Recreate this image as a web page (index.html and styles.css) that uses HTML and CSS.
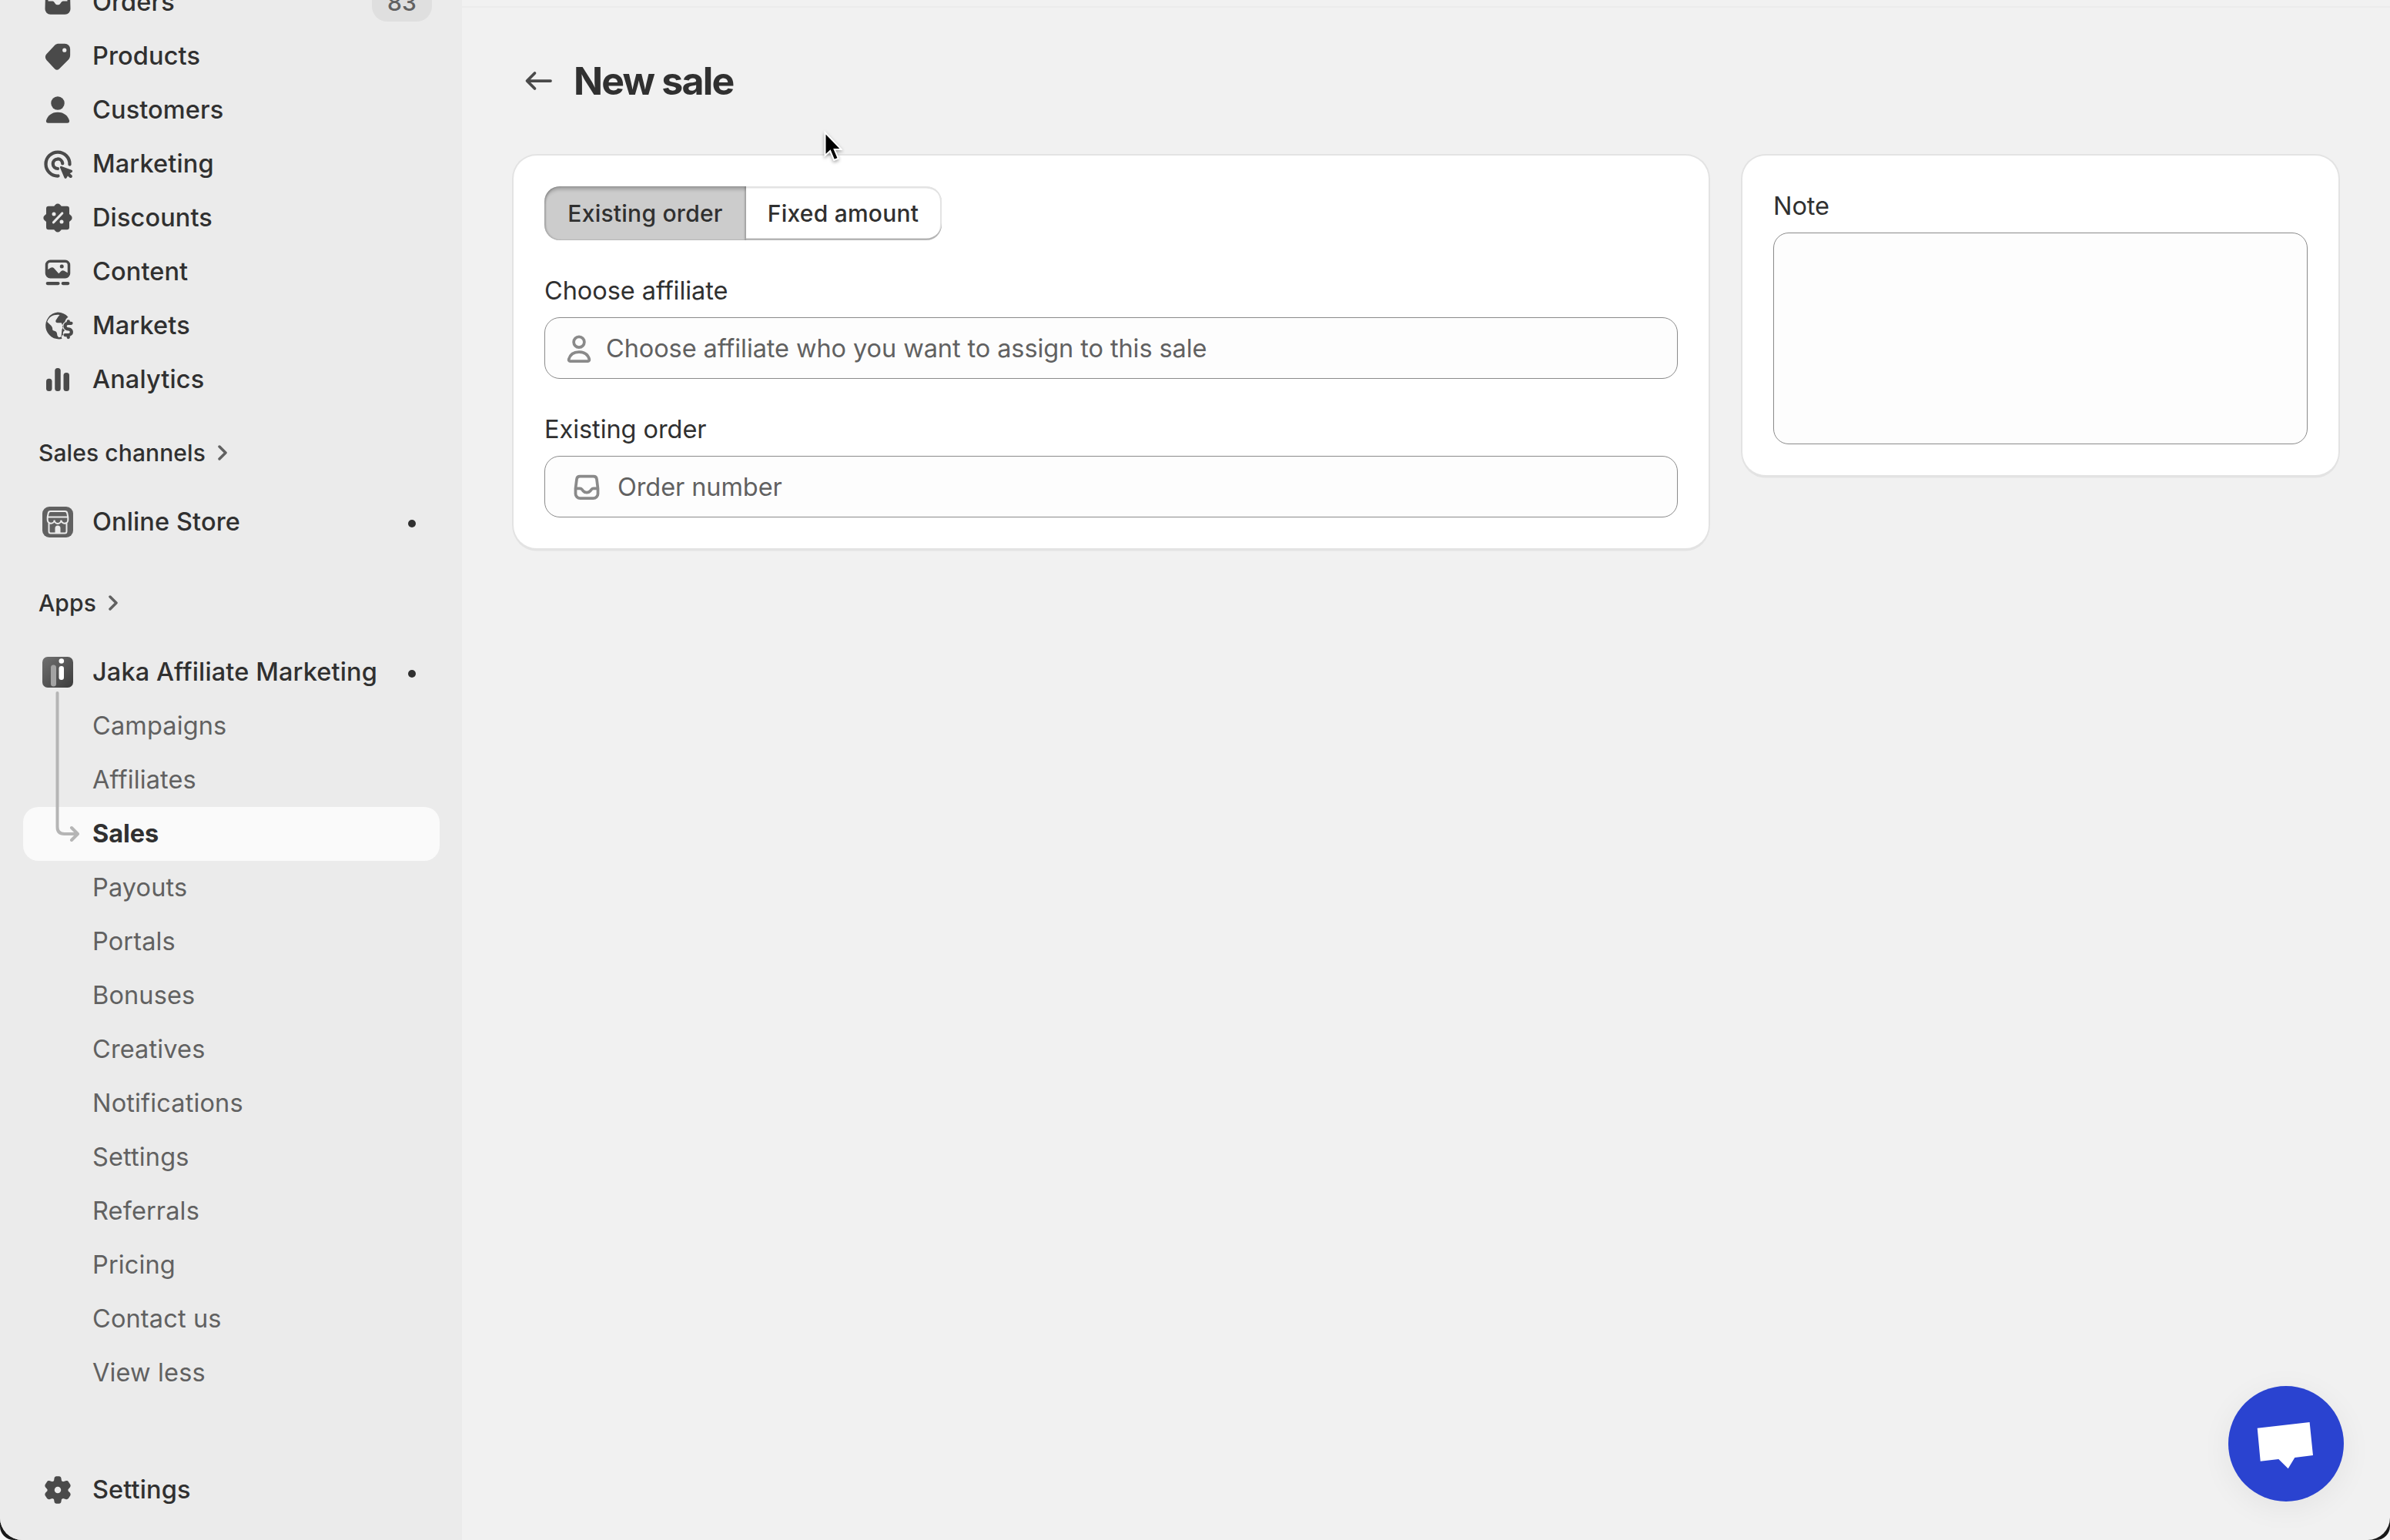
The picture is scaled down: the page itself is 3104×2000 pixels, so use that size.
FILE: index.html
```html
<!DOCTYPE html>
<html lang="en">
<head>
    <meta charset="utf-8">
    <title>New sale</title>
    <link rel="stylesheet" href="styles.css">
</head>
<body>
    <div class="frame">
    <div class="window">
        <nav class="sidebar">
            <ul class="nav-list">
                <li class="nav-item">
                    <svg class="icon" viewBox="0 0 20 20"><path fill-rule="evenodd" d="M6 3.5h8a2.4 2.4 0 0 1 2.4 2L16.6 13.5a2.8 2.8 0 0 1-2.8 2.8h-7.6a2.8 2.8 0 0 1-2.8-2.8l.2-8a2.4 2.4 0 0 1 2.4-2zM5 9.4h2c.5 0 .9.2 1.2.6l.5.7c.6.8 2 .8 2.6 0l.5-.7c.3-.4.7-.6 1.2-.6h2v-3a1.3 1.3 0 0 0-1.3-1.3h-7.4a1.3 1.3 0 0 0-1.3 1.3z"/></svg>
                    <span>Orders</span>
                    <span class="count">83</span>
                </li>
                <li class="nav-item">
                    <svg class="icon" viewBox="0 0 20 20"><path fill-rule="evenodd" d="M10.6 3.5h3.1a2.75 2.75 0 0 1 2.75 2.75v3.1c0 .9-.3 1.7-.9 2.4l-4.7 4.7a1.8 1.8 0 0 1-2.5 0l-4.2-4.5a2.3 2.3 0 0 1 0-3.1l4.3-4.6c.6-.5 1.3-.75 2.15-.75zM13.5 7.9a1.05 1.05 0 1 0 0-2.1 1.05 1.05 0 0 0 0 2.1z"/></svg>
                    <span>Products</span>
                </li>
                <li class="nav-item">
                    <svg class="icon" viewBox="0 0 20 20"><circle cx="10" cy="6.4" r="3.5"/><path d="M10 11.1c-3.3 0-5.4 2-6 4.3-.2.8.3 1.3 1 1.3h10c.7 0 1.2-.5 1-1.3-.6-2.3-2.7-4.3-6-4.3z"/></svg>
                    <span>Customers</span>
                </li>
                <li class="nav-item">
                    <svg class="icon" viewBox="0 0 20 20"><g class="line"><path d="M16.2 10.2a6.2 6.2 0 1 0-6 6"/><path d="M12.5 9.7a2.5 2.5 0 1 0-2.5 2.7"/></g><path d="M11.2 11.9c-.1-.5.3-.9.8-.7l5.2 1.9c.6.2.6 1 .1 1.2l-1 .6 1 .9c.4.4.3.9 0 1.2s-.8.3-1.2 0l-.9-.8-.6 1c-.3.5-1 .5-1.2-.1z"/></svg>
                    <span>Marketing</span>
                </li>
                <li class="nav-item">
                    <svg class="icon" viewBox="0 0 20 20"><path d="M8.800 3.1a1.6 1.6 0 0 1 2.4 0l.7.8h2.9a1.2 1.2 0 0 1 1.2 1.2v2.9l.9.8a1.6 1.6 0 0 1 0 2.4l-.9.8v2.9a1.2 1.2 0 0 1-1.2 1.2h-2.9l-.7.8a1.6 1.6 0 0 1-2.4 0l-.7-.8h-2.9a1.2 1.2 0 0 1-1.2-1.2v-2.9l-.9-.8a1.6 1.6 0 0 1 0-2.4l.9-.8v-2.9a1.2 1.2 0 0 1 1.2-1.2h2.9z"/><path class="cut" d="M7.8 12.3l4.5-4.7"/><circle class="hole" cx="8" cy="8" r="1"/><circle class="hole" cx="12" cy="12" r="1"/></svg>
                    <span>Discounts</span>
                </li>
                <li class="nav-item">
                    <svg class="icon" viewBox="0 0 20 20"><path fill-rule="evenodd" d="M6.1 3.8h7.8a2.6 2.6 0 0 1 2.6 2.6v4.4a2.6 2.6 0 0 1-2.6 2.6h-7.8a2.6 2.6 0 0 1-2.6-2.6v-4.4a2.6 2.6 0 0 1 2.6-2.6zM4.9 8.8l1.4-.9c.6-.4 1.3-.3 1.7.2l2.5 2.8 1.2-1.2c.5-.5 1.2-.6 1.7-.2l1.7 1v-4.1a1.2 1.2 0 0 0-1.2-1.2h-7.8a1.2 1.2 0 0 0-1.2 1.2z"/><circle cx="12.1" cy="7.2" r="1"/><path class="line" d="M4.7 16h5.5M12.7 16h2.6"/></svg>
                    <span>Content</span>
                </li>
                <li class="nav-item">
                    <svg class="icon" viewBox="0 0 20 20"><path fill-rule="evenodd" d="M10 3c2.2 0 4 .9 5.4 2.5-.9.7-1.5 1.5-1.7 2.5-.8.5-1.3 1.2-1.3 2.2 0 1 .5 1.7 1.3 2.2-.9.5-1.2 1.4-.9 2.2-.9.6-1 1.5-.6 2.200a7 7 0 1 1-2.200-13.800zM4.500 8l2.100 2c.5.6.7 1.2.7 2 0 .7 1.2.6 1.8 1.1.6.5.5 1.2.7 2.1l.7.9 1.3-.3.4-3.9.6-1.300-.9-2.100h-2c-.8 0-1.200-.6-.9-1.300l1.300-2 .7-.8c-3-.4-5.500.8-6.500 3.600z"/><path class="line" d="M17 8.7h-1.7a1.5 1.5 0 0 0 0 3h.3a1.5 1.5 0 0 1 0 3.1h-1.8M15.5 7.7v.8M15.5 15v1"/></svg>
                    <span>Markets</span>
                </li>
                <li class="nav-item">
                    <svg class="icon" viewBox="0 0 20 20"><rect x="4" y="9.5" width="3" height="6.5" rx="1.4"/><rect x="8.5" y="4" width="3" height="12" rx="1.4"/><rect x="13" y="6.4" width="3" height="9.6" rx="1.4"/></svg>
                    <span>Analytics</span>
                </li>
            </ul>

            <div class="nav-heading">
                <span>Sales channels</span>
                <svg class="chevron" viewBox="0 0 14 20"><path d="M2 2l8 8-8 8"/></svg>
            </div>
            <ul class="nav-list">
                <li class="nav-item">
                    <svg class="app-icon" viewBox="0 0 40 40"><rect class="store-bg" width="40" height="40" rx="9"/><path class="store-door" d="M16.5 34.5v-6.500a3.5 3.5 0 0 1 7 0v6.500z"/><g class="store-line"><path d="M10.5 6h19c1.5 0 2.5 1 2.8 2.5l1 5v3.5a4.4 4.4 0 0 1-8.9.5 4.4 4.4 0 0 1-8.8 0 4.4 4.4 0 0 1-8.9-.5v-3.5l1-5c.3-1.5 1.3-2.5 2.8-2.5zM7 13.5h26M8.5 21v11c0 1.5.8 2.5 2.3 2.5h18.4c1.5 0 2.3-1 2.3-2.5v-11"/></g></svg>
                    <span>Online Store</span>
                    <span class="dot"></span>
                </li>
            </ul>

            <div class="nav-heading apps">
                <span>Apps</span>
                <svg class="chevron" viewBox="0 0 14 20"><path d="M2 2l8 8-8 8"/></svg>
            </div>
            <ul class="nav-list sub-list">
                <li class="nav-item">
                    <svg class="app-icon" viewBox="0 0 40 40">
                        <defs><linearGradient id="jaka" x1="0" y1="0" x2="1" y2="1"><stop offset="0" stop-color="#707070"/><stop offset="1" stop-color="#3c3c3c"/></linearGradient></defs>
                        <rect width="40" height="40" rx="7" fill="url(#jaka)"/><rect x="11" y="10.5" width="7" height="28" rx="3.5" fill="#a3a3a3"/><rect x="21.5" y="12" width="6.5" height="18" rx="3.2" fill="#fff"/><circle cx="24.8" cy="5.5" r="3.3" fill="#fff"/>
                    </svg>
                    <span>Jaka Affiliate Marketing</span>
                    <span class="dot"></span>
                </li>
                <li class="nav-item sub">Campaigns</li>
                <li class="nav-item sub">Affiliates</li>
                <li class="nav-item sub active">Sales</li>
                <li class="nav-item sub">Payouts</li>
                <li class="nav-item sub">Portals</li>
                <li class="nav-item sub">Bonuses</li>
                <li class="nav-item sub">Creatives</li>
                <li class="nav-item sub">Notifications</li>
                <li class="nav-item sub">Settings</li>
                <li class="nav-item sub">Referrals</li>
                <li class="nav-item sub">Pricing</li>
                <li class="nav-item sub">Contact us</li>
                <li class="nav-item sub">View less</li>
                <svg class="branch" viewBox="0 0 32 198"><path d="M2.5 2v174q0 9 9 9h16M21 177l8 8-8 8"/></svg>
            </ul>

            <div class="nav-item settings">
                <svg class="icon" viewBox="0 0 20 20"><path fill-rule="evenodd" d="M8.2 4c.1-.7.5-1.1 1.1-1.1h1.4c.6 0 1 .4 1.1 1.1l.2 1.3.8.4 1.3-.4c.6-.2 1.2 0 1.5.5l.8 1.2c.4.6.3 1.2-.1 1.7l-.9 1v.8l.9.9c.4.5.5 1.1.1 1.7l-.8 1.2c-.3.5-.9.7-1.5.5l-1.3-.4-.8.4-.2 1.2c-.1.7-.5 1.1-1.1 1.1h-1.4c-.6 0-1-.4-1.1-1.1l-.2-1.2-.8-.4-1.3.4c-.6.2-1.2 0-1.5-.5l-.8-1.2c-.4-.6-.3-1.2.1-1.7l.9-.9v-.8l-.9-1c-.4-.5-.5-1.1-.1-1.7l.8-1.2c.3-.5.9-.7 1.5-.5l1.3.4.8-.4zM10 11.7a1.7 1.7 0 1 0 0-3.4 1.7 1.7 0 0 0 0 3.4z"/></svg>
                <span>Settings</span>
            </div>
        </nav>

        <main class="main">
            <header class="page-header">
                <svg class="back" viewBox="0 0 50 50"><path d="M40 25h-29M19.5 15l-10 10 10 10"/></svg>
                <h1>New sale</h1>
            </header>

            <div class="layout">
                <section class="card">
                    <div class="segmented">
                        <button class="segment pressed">Existing order</button>
                        <button class="segment">Fixed amount</button>
                    </div>
                    <div class="field">
                        <label>Choose affiliate</label>
                        <div class="input">
                            <svg class="field-icon" viewBox="0 0 20 20"><circle cx="10" cy="6.5" r="2.75"/><path d="M10 11.6c-2.8 0-4.7 1.5-5.3 3.8-.1.6.1 1 .7 1h9.2c.6 0 .8-.4.7-1-.6-2.3-2.5-3.8-5.3-3.8z"/></svg>
                            <span>Choose affiliate who you want to assign to this sale</span>
                        </div>
                    </div>
                    <div class="field">
                        <label>Existing order</label>
                        <div class="input order">
                            <svg class="field-icon" viewBox="0 0 20 20"><path d="M6.5 4.25h7c.9 0 1.6.6 1.7 1.5l.6 4.8v2.7a2.4 2.4 0 0 1-2.4 2.4h-6.8a2.4 2.4 0 0 1-2.4-2.4v-2.7l.6-4.8c.1-.9.8-1.5 1.7-1.5zM4.3 10.5h2.2c.5 0 .8.2 1.1.6l.5.7c.9 1.1 2.900 1.1 3.8 0l.5-.7c.3-.4.6-.6 1.1-.6h2.2"/></svg>
                            <span>Order number</span>
                        </div>
                    </div>
                </section>

                <aside class="card">
                    <div class="field">
                        <label>Note</label>
                        <div class="input note"></div>
                    </div>
                </aside>
            </div>
        </main>
    </div>
    </div>

    <div class="chat">
        <svg viewBox="0 0 150 150"><path d="M37.7 54.7L105.6 47l4.4 43-23.7 3-8.6 14.3-12.4-12.3-23.6 2.7z"/></svg>
    </div>
    <svg class="cursor" viewBox="0 0 24 42"><path d="M1.5 2v30l6.7-6 5 12 5.5-2.3-5-11.7h9z"/></svg>
</body>
</html>
```
FILE: styles.css
```css
* {
    box-sizing: border-box;
}
body {
    margin: 0;
    height: 2000px;
    overflow: hidden;
    background: #f7f7f7;
    font-family: Inter, sans-serif;
    font-size: 32.5px;
    line-height: 50px;
    color: #303030;
}
.frame {
    background: #1a1a1a;
    border-radius: 0 0 18px 18px;
}
.window {
    display: flex;
    height: 2000px;
    overflow: hidden;
    background: #f1f1f1;
    border-radius: 0 0 29px 29px;
}
/* Sidebar */
.sidebar {
    display: flex;
    flex-direction: column;
    width: 600px;
    height: 2032px;
    margin-top: -32px;
    padding: 0 29px 30px 30px;
    background: #ebebeb;
}
.nav-list {
    list-style: none;
    margin: 0;
    padding: 0;
}
.nav-item {
    display: flex;
    align-items: center;
    height: 70px;
    padding: 0 10px 0 20px;
    border-radius: 20px;
    font-weight: 550;
    letter-spacing: 0.12px;
}
.icon {
    width: 50px;
    height: 50px;
    margin-right: 20px;
    fill: #4a4a4a;
}
.icon .line {
    fill: none;
    stroke: #4a4a4a;
    stroke-width: 1.7;
    stroke-linecap: round;
}
.icon .cut {
    stroke: #ebebeb;
    stroke-width: 1.3;
    stroke-linecap: round;
}
.icon .hole {
    fill: #ebebeb;
}
.app-icon {
    width: 40px;
    height: 40px;
    margin: 0 25px 0 5px;
}
.store-bg {
    fill: #616161;
}
.store-door {
    fill: #ebebeb;
}
.store-line {
    fill: none;
    stroke: #ebebeb;
    stroke-width: 2;
}
.count {
    height: 50px;
    margin-left: auto;
    padding: 0 20px;
    border-radius: 20px;
    background: #dfdfdf;
    color: #616161;
    font-size: 30px;
}
.dot {
    width: 10px;
    height: 10px;
    margin: 4px 21px 0 auto;
    border-radius: 50%;
    background: #303030;
}
.nav-heading {
    display: flex;
    align-items: center;
    height: 70px;
    margin: 25px 0 20px;
    padding-left: 20px;
    font-size: 30px;
    font-weight: 550;
    letter-spacing: 0.1px;
}
.nav-heading.apps {
    margin-top: 35px;
}
.chevron {
    width: 14px;
    height: 20px;
    margin-left: 16px;
    fill: none;
    stroke: #616161;
    stroke-width: 3.5;
    stroke-linecap: round;
    stroke-linejoin: round;
}
.sub-list {
    position: relative;
}
.sub {
    padding-left: 90px;
    font-weight: 400;
    letter-spacing: 0.14px;
    color: #616161;
}
.sub.active {
    background: #fafafa;
    color: #303030;
    font-weight: 650;
    letter-spacing: -0.1px;
}
/* Connector from the app icon to the active page */
.branch {
    position: absolute;
    left: 42px;
    top: 60px;
    width: 32px;
    height: 198px;
    fill: none;
    stroke: #b5b5b5;
    stroke-width: 4;
    stroke-linecap: round;
    stroke-linejoin: round;
}
.settings {
    margin-top: auto;
}
/* Page */
.main {
    flex: 1;
    margin-top: 8px;
    padding: 0 67px;
    border-top: 2px solid #ebebeb;
}
.page-header {
    display: flex;
    align-items: center;
    gap: 20px;
    height: 192px;
    padding: 0 0 2px 8px;
}
.back {
    width: 50px;
    height: 50px;
    fill: none;
    stroke: #4a4a4a;
    stroke-width: 3.75;
    stroke-linecap: round;
    stroke-linejoin: round;
}
h1 {
    margin: 0;
    font-size: 50px;
    font-weight: 700;
    letter-spacing: -1.8px;
}
.layout {
    display: flex;
    align-items: flex-start;
    gap: 44px;
}
.card {
    width: 1552px;
    padding: 40px;
    border-radius: 30px;
    background: #fff;
    box-shadow: 0 2.5px 0 1px #e3e3e3, 0 0 0 2px #e3e3e3;
}
aside.card {
    width: 774px;
}
.segmented {
    display: flex;
    width: 516px;
    margin-bottom: 40px;
}
.segment {
    height: 70px;
    padding: 0 2px 0 0;
    border: none;
    border-radius: 0 20px 20px 0;
    background: #fff;
    box-shadow: inset 0 -2.5px 0 #b5b5b5, inset -2px 0 0 #e3e3e3, inset 0 2.5px 0 #e3e3e3;
    color: #303030;
    font: 550 30px/50px Inter, sans-serif;
    letter-spacing: 0.25px;
    flex: 0 0 254px;
}
.segment.pressed {
    flex-basis: 262px;
    padding: 0;
    border-radius: 20px 0 0 20px;
    background: #ccc;
    box-shadow: inset 0 6px 4px -2px rgba(26, 26, 26, 0.25), inset 2px 0 2px rgba(26, 26, 26, 0.2), inset -2px 0 2px rgba(26, 26, 26, 0.2);
}
.field + .field {
    margin-top: 40px;
}
label {
    display: block;
    height: 50px;
    margin-bottom: 10px;
    padding-top: 1px;
    letter-spacing: -0.06px;
}
.input {
    display: flex;
    align-items: center;
    gap: 10px;
    height: 80px;
    padding: 1px 19px 0;
    border: 1px solid #8a8a8a;
    border-radius: 20px;
    background: #fdfdfd;
    color: #616161;
    letter-spacing: -0.09px;
}
.input.order {
    gap: 15px;
    padding-left: 29px;
}
.input.note {
    height: 275px;
}
.field-icon {
    width: 50px;
    height: 50px;
    fill: none;
    stroke: #8a8a8a;
    stroke-width: 1.5;
    stroke-linejoin: round;
}
/* Floating layers */
.chat {
    position: absolute;
    left: 2894px;
    top: 1800px;
    width: 150px;
    height: 150px;
    border-radius: 50%;
    background: #2a43d0;
    box-shadow: 0 8px 40px rgba(0, 0, 0, 0.06);
}
.chat svg {
    display: block;
    fill: #fff;
}
.cursor {
    position: absolute;
    left: 1070px;
    top: 170px;
    width: 24px;
    height: 42px;
    fill: #000;
    stroke: #fff;
    stroke-width: 2;
    filter: drop-shadow(0 2px 2px rgba(0, 0, 0, 0.35));
}
```
